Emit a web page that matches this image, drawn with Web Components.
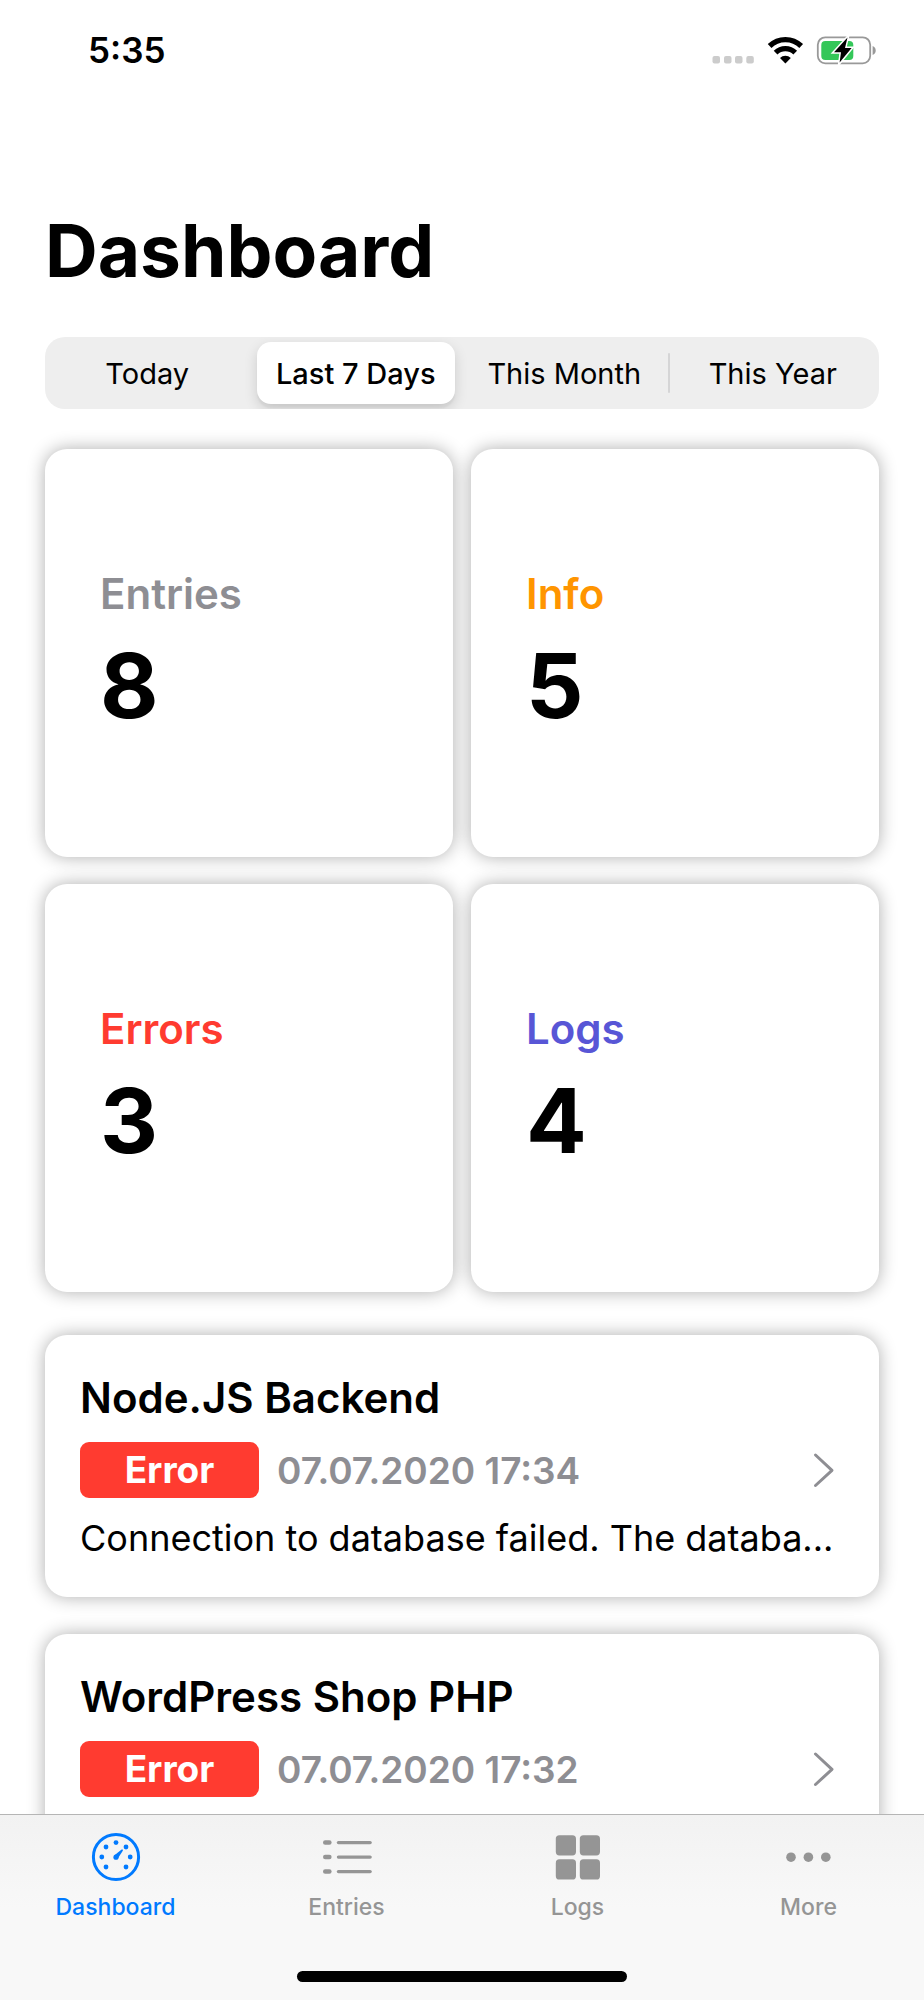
<!DOCTYPE html>
<html lang="en">
<head>
<meta charset="utf-8">
<meta name="viewport" content="width=device-width, initial-scale=1">
<title>Dashboard</title>
<style>
  html, body { margin: 0; height: 100%; }
  body { background: #fff; color: #000; font-family: Inter, "Liberation Sans", sans-serif; }
</style>
</head>
<body>
<app-shell>
  <status-bar slot="top">5:35</status-bar>
  <page-title>Dashboard</page-title>
  <range-picker options="Today,Last 7 Days,This Month,This Year" selected="1"></range-picker>
  <stat-grid>
    <stat-card label="Entries" value="8" style="--tone:#8e8e93"></stat-card>
    <stat-card label="Info" value="5" style="--tone:#ff9500"></stat-card>
    <stat-card label="Errors" value="3" style="--tone:#ff3b30"></stat-card>
    <stat-card label="Logs" value="4" style="--tone:#5856d6"></stat-card>
  </stat-grid>
  <entry-list>
    <entry-card level="Error" date="07.07.2020 17:34">
      <span slot="name">Node.JS Backend</span>
      Connection to database failed. The databa...
    </entry-card>
    <entry-card level="Error" date="07.07.2020 17:32">
      <span slot="name">WordPress Shop PHP</span>
    </entry-card>
  </entry-list>
  <tab-bar slot="bottom">
    <tab-item icon="gauge" active>Dashboard</tab-item>
    <tab-item icon="list">Entries</tab-item>
    <tab-item icon="grid">Logs</tab-item>
    <tab-item icon="more">More</tab-item>
  </tab-bar>
</app-shell>

<script>
class Base extends HTMLElement {
  connectedCallback() {
    if (this.shadowRoot) return;
    this.attachShadow({ mode: "open" }).innerHTML = this.view();
  }
  attr(name) { return this.getAttribute(name) || ""; }
}

customElements.define("app-shell", class extends Base {
  view() {
    return `<style>
      :host { display: flex; flex-direction: column; height: 100vh; overflow: hidden; }
      main { flex: 1; min-height: 0; overflow-y: auto; scrollbar-width: none; padding: 107px 45px 40px; box-sizing: border-box; }
    </style>
    <slot name="top"></slot><main><slot></slot></main><slot name="bottom"></slot>`;
  }
});

customElements.define("status-bar", class extends Base {
  view() {
    return `<style>
      :host { display: flex; align-items: center; justify-content: space-between; height: 100px; padding: 0 44px 0 88px; font-size: 35px; font-weight: 600; line-height: 44px; }
      svg { display: block; width: 170px; height: 40px; }
    </style>
    <time><slot></slot></time>
    <svg viewBox="710 30 170 40" role="img" aria-label="No signal, Wi-Fi, charging">
      <g fill="#ccc">
        <rect x="712.5" y="56" width="7.5" height="7.5" rx="2"/><rect x="724" y="56" width="7.5" height="7.5" rx="2"/>
        <rect x="735" y="56" width="7.5" height="7.5" rx="2"/><rect x="746.3" y="56" width="7.5" height="7.5" rx="2"/>
      </g>
      <path d="M769.6 46A22.6 22.6 0 0 1 801.2 46M775.6 52.7A14 14 0 0 1 795.2 52.7" fill="none" stroke="#000" stroke-width="5.3"/>
      <path d="M785.4 63.4L780 58A7.6 7.6 0 0 1 790.8 58Z"/>
      <rect x="817.8" y="37.3" width="52.4" height="26" rx="7.5" fill="none" stroke="#999" stroke-width="1.8"/>
      <path d="M872.6 46a4.8 4.8 0 0 1 0 9Z" fill="#999"/>
      <rect x="821.3" y="41" width="32" height="19" rx="4" fill="#34c759"/>
      <path d="M847.5 37.5L834 52.2H841L839.6 62.6L851.6 48H845Z" fill="#000" stroke="#fff" stroke-width="3" paint-order="stroke"/>
    </svg>`;
  }
});

customElements.define("page-title", class extends Base {
  view() {
    return `<style>
      :host { display: block; margin-bottom: 42px; }
      h1 { margin: 0; font-size: 73px; line-height: 88px; font-weight: 700; }
    </style><h1><slot></slot></h1>`;
  }
});

customElements.define("range-picker", class extends Base {
  view() {
    const selected = Number(this.attr("selected"));
    const items = this.attr("options").split(",").map((text, i) => `
      <div><input type="radio" name="range" id="r${i}" ${i === selected ? "checked" : ""}><label for="r${i}">${text}</label></div>`).join("");
    return `<style>
      :host { display: block; margin-bottom: 40px; }
      fieldset { display: grid; grid-template-columns: repeat(4, 1fr); margin: 0; padding: 0; border: 0; height: 72px; border-radius: 20px; background: #eee; overflow: hidden; }
      div { display: flex; position: relative; padding: 5px 7px 5px 3px; min-width: 0; }
      input { position: absolute; opacity: 0; margin: 0; }
      label { flex: 1; display: flex; align-items: center; justify-content: center; border-radius: 14px; font-size: 29px; font-weight: 400; white-space: nowrap; }
      input:checked + label { background: #fff; font-weight: 500; box-shadow: 0 5px 14px rgba(0,0,0,.14), 0 4px 2px rgba(0,0,0,.04); }
      div:nth-child(3)::after { content: ""; position: absolute; right: 1px; top: 16px; bottom: 16px; width: 2px; border-radius: 1px; background: #d5d5d6; }
    </style><fieldset aria-label="Time range">${items}</fieldset>`;
  }
});

customElements.define("stat-grid", class extends Base {
  view() {
    return `<style>
      :host { display: grid; grid-template-columns: 1fr 1fr; gap: 27px 18px; margin-bottom: 43px; }
    </style><slot></slot>`;
  }
});

customElements.define("stat-card", class extends Base {
  view() {
    return `<style>
      :host { display: flex; flex-direction: column; justify-content: center; gap: 14px; aspect-ratio: 1; padding: 0 55px; box-sizing: border-box; border-radius: 22px; background: #fff; box-shadow: 0 0 18px rgba(0,0,0,.32); }
      h2 { margin: 0; font-size: 42px; line-height: 52px; font-weight: 600; color: var(--tone); }
      p { margin: 0; font-size: 90px; line-height: 104px; font-weight: 700; }
    </style><h2>${this.attr("label")}</h2><p>${this.attr("value")}</p>`;
  }
});

customElements.define("entry-list", class extends Base {
  view() {
    return `<style>:host { display: flex; flex-direction: column; gap: 37px; }</style><slot></slot>`;
  }
});

customElements.define("entry-card", class extends Base {
  view() {
    return `<style>
      :host { display: block; min-height: 262px; padding: 36px 35px; box-sizing: border-box; border-radius: 22px; background: #fff; box-shadow: 0 0 18px rgba(0,0,0,.32); }
      h3 { margin: 0 0 17px; font-size: 42px; line-height: 54px; font-weight: 600; }
      .meta { display: flex; align-items: center; height: 56px; gap: 18px; font-size: 37px; font-weight: 600; color: #8e8e93; white-space: nowrap; }
      .badge { width: 179px; line-height: 56px; border-radius: 9px; background: #ff3b30; color: #fff; text-align: center; font-weight: 700; }
      svg { width: 24px; height: 38px; margin: 0 9px 0 auto; fill: none; stroke: #8e8e93; stroke-width: 3; stroke-linecap: round; stroke-linejoin: round; }
      p { margin: 17px 0 0; font-size: 36px; line-height: 46px; white-space: nowrap; overflow: hidden; text-overflow: ellipsis; }
    </style>
    <h3><slot name="name"></slot></h3>
    <div class="meta"><span class="badge">${this.attr("level")}</span><time>${this.attr("date")}</time>
      <svg viewBox="0 0 24 38" aria-hidden="true"><path d="M4.5 4L21 19.3L4.5 34.5"/></svg></div>
    <p><slot></slot></p>`;
  }
});

customElements.define("tab-bar", class extends Base {
  view() {
    return `<style>
      :host { display: block; position: relative; height: 186px; box-sizing: border-box; border-top: 1px solid #b5b5b5; background: linear-gradient(#f2f2f2, #f8f8f8 50%); }
      nav { display: grid; grid-template-columns: repeat(4, 1fr); }
      .home { position: absolute; left: 50%; bottom: 18px; width: 330px; height: 11px; transform: translateX(-50%); border-radius: 6px; background: #000; }
    </style><nav><slot></slot></nav><div class="home"></div>`;
  }
});

const ICONS = {
  gauge: `<circle cx="28" cy="28" r="22.6" fill="none" stroke="currentColor" stroke-width="3"/>
    <circle cx="28" cy="13.6" r="2.4"/><circle cx="18" cy="18" r="2.4"/><circle cx="38" cy="18" r="2.4"/>
    <circle cx="13.8" cy="28" r="2.4"/><circle cx="42.2" cy="28" r="2.4"/><circle cx="18" cy="38" r="2.4"/><circle cx="38" cy="38" r="2.4"/>
    <circle cx="28" cy="28.2" r="2.6"/><path d="M26.2 26.6L33.6 20.6Q35.4 19.9 34.8 21.8L29.8 29.6Z"/>`,
  list: `<rect x="4" y="11.2" width="8.6" height="4.6" rx="2.2"/><rect x="4" y="25.7" width="8.6" height="4.6" rx="2.2"/><rect x="4" y="40.2" width="8.6" height="4.6" rx="2.2"/>
    <rect x="17.8" y="11.9" width="35" height="3.3" rx="1.6"/><rect x="17.8" y="26.4" width="35" height="3.3" rx="1.6"/><rect x="17.8" y="40.9" width="35" height="3.3" rx="1.6"/>`,
  grid: `<rect x="5.8" y="6.2" width="20.2" height="20.2" rx="3.6"/><rect x="29.8" y="6.2" width="20.2" height="20.2" rx="3.6"/>
    <rect x="5.8" y="30.3" width="20.2" height="20.2" rx="3.6"/><rect x="29.8" y="30.3" width="20.2" height="20.2" rx="3.6"/>`,
  more: `<circle cx="10" cy="28.2" r="4.8"/><circle cx="27.4" cy="28.2" r="4.8"/><circle cx="44.8" cy="28.2" r="4.8"/>`
};

customElements.define("tab-item", class extends Base {
  view() {
    return `<style>
      :host { display: block; color: #959595; }
      :host([active]) { color: #007aff; }
      a { display: flex; flex-direction: column; align-items: center; gap: 8px; padding-top: 14px; color: inherit; text-decoration: none; font-size: 23px; line-height: 28px; font-weight: 500; }
      svg { width: 56px; height: 56px; fill: currentColor; }
    </style>
    <a href="#${this.attr("icon")}"><svg viewBox="0 0 56 56" aria-hidden="true">${ICONS[this.attr("icon")]}</svg><span><slot></slot></span></a>`;
  }
});
</script>
</body>
</html>
